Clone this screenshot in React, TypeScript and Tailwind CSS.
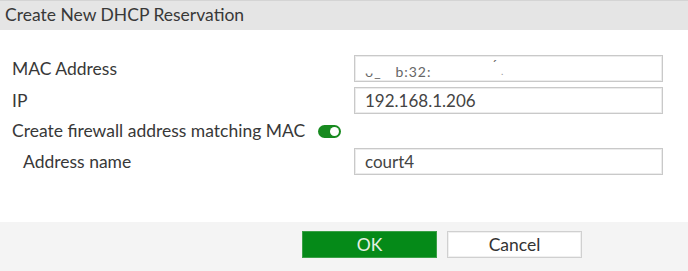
import React from "react";

const font = { fontFamily: "Lato, 'Noto Sans', sans-serif" };

const Field = ({ children }: { children?: React.ReactNode }) => (
  <div className="flex h-[27px] w-[309px] items-center border border-[#c9c9c9] bg-white px-[10px] text-[17px] text-[#444] shadow-[inset_0_0_0_1px_#ececec]">
    {children}
  </div>
);

const Toggle = () => (
  <span className="ml-[13px] inline-flex h-[13px] w-[23px] items-center justify-end rounded-full bg-[#178a1f] px-[2px]">
    <span className="h-[9px] w-[9px] rounded-full bg-white" />
  </span>
);

const App = () => {
  return (
    <div className="flex h-[271px] w-[688px] flex-col bg-white text-[#383838]" style={font}>
      <div className="flex h-[30px] items-center border-t border-[#d4d4d4] bg-[#e5e5e5] px-[5px] text-[17.5px] text-[#383838]">
        Create New DHCP Reservation
      </div>

      <div className="flex flex-1 flex-col gap-[5px] pl-[12px] pt-[25px]">
        <div className="flex items-center">
          <span className="w-[342px] pt-[1px] text-[17.5px]">MAC Address</span>
          <Field>
            <span className="relative top-[3px] text-[14px] tracking-[1px] text-[#666]">
              ᴗ_&nbsp;&nbsp;&nbsp;b:32:
            </span>
            <span className="relative left-[60px] top-[-4px] text-[14px] text-[#666]">ˊ</span>
            <span className="relative left-[64px] top-[3px] text-[10px] text-[#999]">.</span>
          </Field>
        </div>
        <div className="flex items-center">
          <span className="w-[342px] text-[17.5px]">IP</span>
          <Field>192.168.1.206</Field>
        </div>
        <div className="flex h-[24px] items-center text-[17.5px]">
          Create firewall address matching MAC
          <Toggle />
        </div>
        <div className="flex items-center">
          <span className="w-[342px] pl-[11px] text-[17.5px]">Address name</span>
          <Field>court4</Field>
        </div>
      </div>

      <div className="flex h-[49px] gap-[10px] bg-[#f4f4f4] pl-[302px] pt-[9px]">
        <button className="h-[27px] w-[135px] border border-[#3aa046] bg-[#058a18] text-[17.5px] text-[#e3f0e3]">
          OK
        </button>
        <button className="h-[27px] w-[135px] border border-[#d0d0d0] bg-white text-[17.5px] text-[#333] shadow-[inset_0_0_0_1px_#f0f0f0]">
          Cancel
        </button>
      </div>
    </div>
  );
};

export default App;
